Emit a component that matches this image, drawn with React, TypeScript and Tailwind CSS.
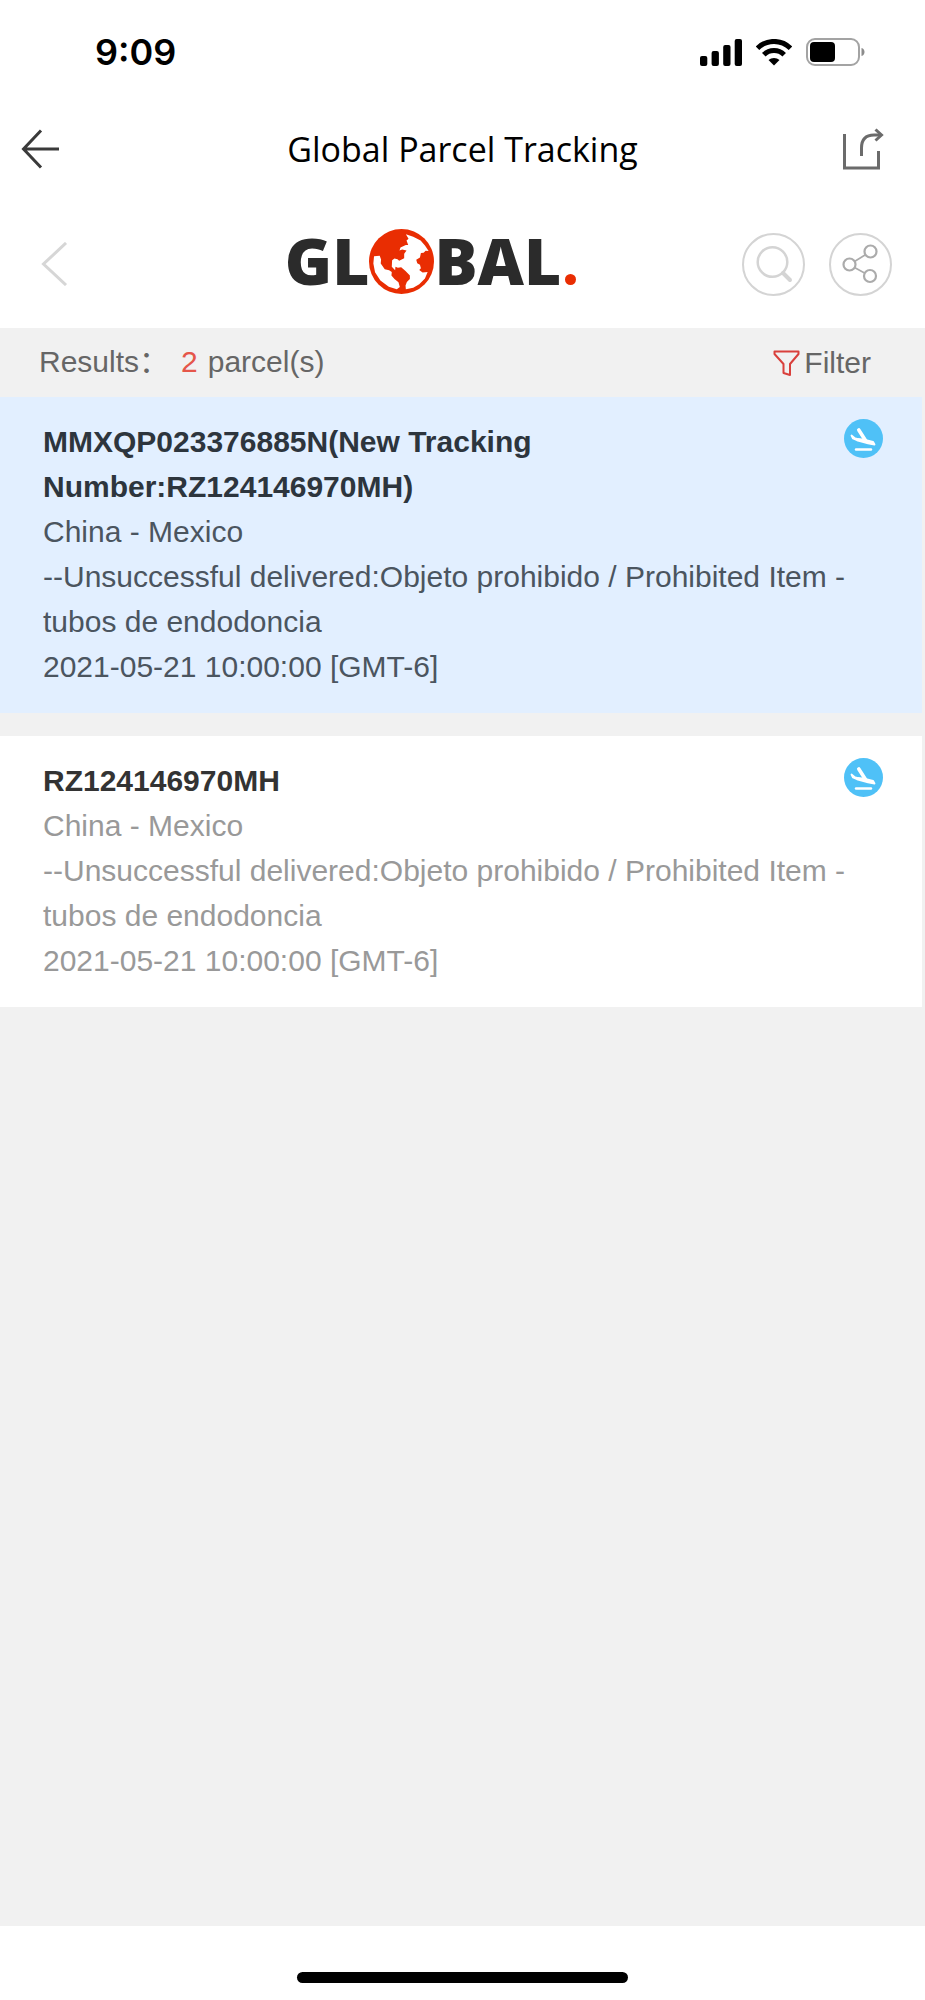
import { FC } from 'react';

interface Parcel {
  number: string;
  route: string;
  status: string;
  time: string;
  active?: boolean;
}

const parcels: Parcel[] = [
  {
    number: 'MMXQP023376885N(New Tracking Number:RZ124146970MH)',
    route: 'China - Mexico',
    status: '--Unsuccessful delivered:Objeto prohibido / Prohibited Item - tubos de endodoncia',
    time: '2021-05-21 10:00:00 [GMT-6]',
    active: true,
  },
  {
    number: 'RZ124146970MH',
    route: 'China - Mexico',
    status: '--Unsuccessful delivered:Objeto prohibido / Prohibited Item - tubos de endodoncia',
    time: '2021-05-21 10:00:00 [GMT-6]',
  },
];

const StatusBar: FC = () => (
  <div className="flex h-[104px] items-center justify-between pr-[60px] pl-[95px]">
    <span className="font-['Inter',sans-serif] text-[36px] leading-[40px] font-semibold text-black">9:09</span>
    <div className="flex items-center gap-[14px]">
      <svg className="h-[27px] w-[42px]" viewBox="0 0 42 27">
        <rect x="0" y="17" width="7.300" height="10" rx="2" />
        <rect x="11.600" y="12" width="7.300" height="15" rx="2" />
        <rect x="23.200" y="6" width="7.300" height="21" rx="2" />
        <rect x="34.700" y="0" width="7.300" height="27" rx="2" />
      </svg>
      <svg className="h-[27px] w-[36px]" viewBox="0 0 36 27">
        <path d="M1.500 9.200A23.500 23.500 0 0 1 34.500 9.200" fill="none" stroke="#000" strokeWidth="5" />
        <path d="M7.800 15.800A14.500 14.500 0 0 1 28.200 15.800" fill="none" stroke="#000" strokeWidth="5" />
        <path d="M12.500 21A8.500 8.500 0 0 1 23.500 21L18 26.500Z" />
      </svg>
      <svg className="h-[28px] w-[59px]" viewBox="0 0 59 28">
        <rect x="1" y="1" width="52" height="26" rx="8" fill="none" stroke="#a3a3a3" strokeWidth="2" />
        <rect x="4" y="4" width="25" height="20" rx="4" />
        <path d="M55.500 10C59.500 11 59.500 17 55.500 18Z" fill="#8c8c8c" />
      </svg>
    </div>
  </div>
);

const NavBar: FC = () => (
  <nav className="grid h-[90px] grid-cols-[1fr_auto_1fr] items-center px-[21px]">
    <button type="button" aria-label="Back" className="w-[38px]">
      <svg className="h-[40px] w-[38px]" viewBox="0 0 38 40" fill="none" stroke="#3a3a3a" strokeWidth="3">
        <path d="M20 1.500L2.500 20L20 38.500M2.500 20H38" />
      </svg>
    </button>
    <h1 className="font-['Open_Sans',sans-serif] text-[34px] leading-[48px] text-black">Global Parcel Tracking</h1>
    <button type="button" aria-label="Open in browser" className="justify-self-end pr-5">
      <svg className="h-[42px] w-[42px]" viewBox="0 0 42 42" fill="none" stroke="#6b6b6b" strokeWidth="3">
        <path d="M2.500 6V40H36.500V23" />
        <path d="M19.500 28V20Q19.500 7 32 7H39" />
        <path d="M33.500 1.500L39.500 7L33.500 12.500" />
      </svg>
    </button>
  </nav>
);

const Logo: FC = () => (
  <div className="flex items-center pr-[72px] pb-[6px] font-['Open_Sans',sans-serif] text-[64px] leading-[64px] font-extrabold text-[#2b2b2b]">
    <span>GL</span>
    <svg className="h-[65px] w-[65px]" viewBox="28 27 194 194">
      <circle cx="125" cy="124" r="97" fill="#e92d02" />
      <g fill="#fff">
        <path d="M138 43L160 50L182 61L195 76L206 93L197 92L191 98L183 99L180 112L169 119L172 129L180 134L183 144L178 149L188 157L203 155L195 175L178 192L160 202L138 207L137 196L141 185L150 176L150 166L137 152L124 141L114 143L107 140L106 150L96 140L97 120L104 115L113 117L118 122L133 114L133 101L140 91L127 88L119 91L122 82L138 75L145 75L140 61L146 56Z" />
        <path d="M43 108L60 107L64 118L63 130L75 147L88 150L96 155L95 166L104 176L116 186L120 200L111 207L87 199L62 181L46 156L41 130Z" />
      </g>
    </svg>
    <span>BAL</span>
    <span className="mt-9 ml-1 size-[11px] rounded-full bg-[#e92d02]" />
  </div>
);

const BrandBar: FC = () => (
  <header className="grid h-[134px] grid-cols-[1fr_auto_1fr] items-center pt-[6px] pr-[33px] pl-[41px]">
    <button type="button" aria-label="Previous page" className="w-[27px]">
      <svg className="h-[44px] w-[27px]" viewBox="0 0 27 44" fill="none" stroke="#d6d6d6" strokeWidth="3">
        <path d="M25 1L2.500 22L25 43" />
      </svg>
    </button>
    <Logo />
    <div className="flex items-center justify-end gap-6">
      <button type="button" aria-label="Search">
        <svg className="size-[63px]" viewBox="0 0 63 63" fill="none" stroke="#d4d4d4">
          <circle cx="31.500" cy="31.500" r="30.500" strokeWidth="2" />
          <circle cx="30.500" cy="29" r="14.800" strokeWidth="2.500" />
          <path d="M41 40L48 47" strokeWidth="4" strokeLinecap="round" />
        </svg>
      </button>
      <button type="button" aria-label="Share">
        <svg className="size-[63px]" viewBox="0 0 63 63" fill="none" stroke="#ababab" strokeWidth="2.200">
          <circle cx="31.500" cy="31.500" r="30.500" stroke="#d4d4d4" strokeWidth="2" />
          <circle cx="20.500" cy="31.500" r="6" />
          <circle cx="41.500" cy="18.500" r="6" />
          <circle cx="41" cy="43" r="6" />
          <path d="M25.500 28.500L36 22M25.500 34.500L35.500 40" strokeWidth="1.600" />
        </svg>
      </button>
    </div>
  </header>
);

const ResultsBar: FC<{ count: number }> = ({ count }) => (
  <div className="flex h-[69px] items-center justify-between pr-[54px] pl-[39px] text-[30px] leading-[40px] text-[#666]">
    <p className="flex pb-[2px]">
      <span>Results：</span>
      <span className="mr-[10px] ml-3 text-[#e5564a]">{count}</span>
      <span>parcel(s)</span>
    </p>
    <button type="button" className="flex items-center gap-1">
      <svg className="h-[26px] w-[27px]" viewBox="0 0 27 26" fill="none" stroke="#d9403c" strokeWidth="2" strokeLinejoin="round">
        <path d="M1.500 1.500H25.500V4L17 14V25L10.500 23V14L1.500 4Z" />
      </svg>
      Filter
    </button>
  </div>
);

const ArrivalIcon: FC = () => (
  <svg className="size-[39px] shrink-0" viewBox="0 0 39 39" fill="none" stroke="#fff" strokeLinecap="round" strokeLinejoin="round">
    <circle cx="19.500" cy="19.500" r="19.500" fill="#4fc1f7" stroke="none" />
    <path d="M7.500 16.500L9 19.500L13 21.300L24 24.300L30.500 25.500L29 22.800L22 21L14 20L10.500 19Z" fill="#fff" strokeWidth="1.800" />
    <path d="M14.800 11L21.500 21.500" strokeWidth="3.600" />
    <path d="M12 30.500H27" strokeWidth="2.400" />
  </svg>
);

const ParcelCard: FC<{ parcel: Parcel }> = ({ parcel }) => (
  <li
    className={`pt-[22px] pr-[39px] pb-6 pl-[43px] text-[30px] leading-[45px] ${
      parcel.active ? 'bg-[#e2efff] text-[#4b555f]' : 'bg-white text-[#999]'
    }`}
  >
    <div className="flex items-start justify-between">
      <h2 className={`max-w-[560px] font-bold ${parcel.active ? 'text-[#2d353d]' : 'text-[#333]'}`}>{parcel.number}</h2>
      <ArrivalIcon />
    </div>
    <p>{parcel.route}</p>
    <p>{parcel.status}</p>
    <p>{parcel.time}</p>
  </li>
);

const App: FC = () => {
  return (
    <div className="flex min-h-screen flex-col bg-white font-['Liberation_Sans','Noto_Sans_CJK_SC',sans-serif]">
      <StatusBar />
      <NavBar />
      <BrandBar />
      <main className="flex-1 bg-[#f1f1f1]">
        <ResultsBar count={parcels.length} />
        <ul className="flex flex-col gap-[23px] pr-[3px]">
          {parcels.map((parcel) => (
            <ParcelCard key={parcel.number} parcel={parcel} />
          ))}
        </ul>
      </main>
      <footer className="flex h-[74px] items-end justify-center pb-[17px]">
        <div className="h-[11px] w-[331px] rounded-full bg-black" />
      </footer>
    </div>
  );
};

export default App;
